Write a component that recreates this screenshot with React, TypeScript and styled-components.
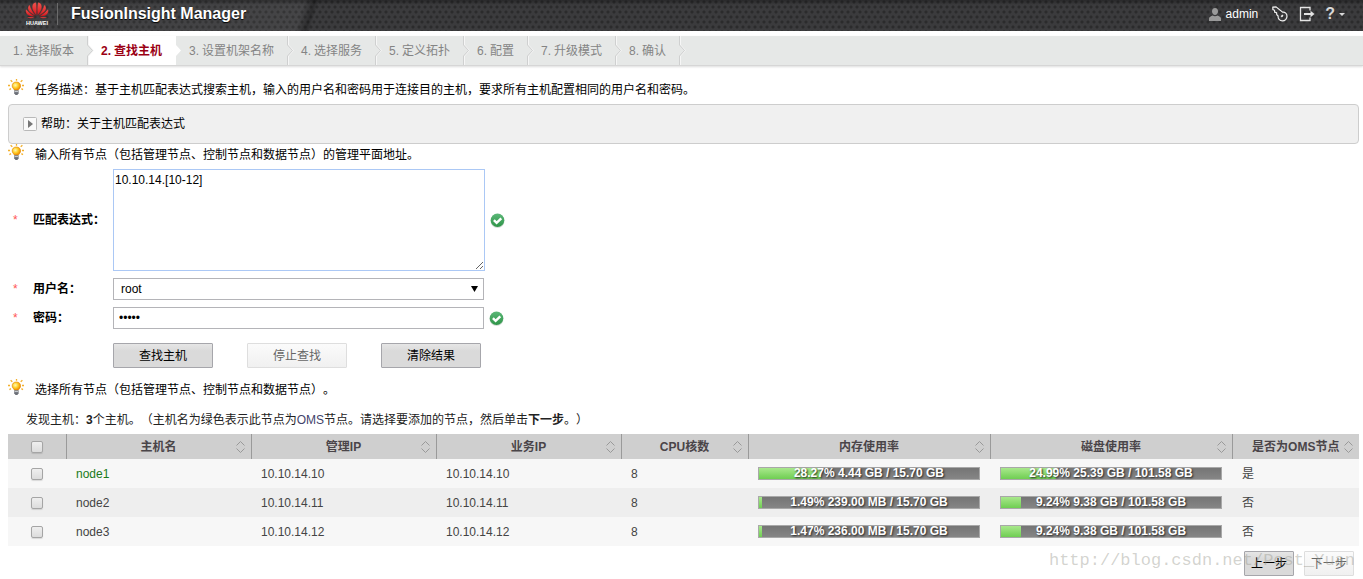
import React, { useState } from "react";
import styled, { createGlobalStyle } from "styled-components";

const GlobalStyle = createGlobalStyle`
  *, *::before, *::after { box-sizing: border-box; }
  body {
    margin: 0;
    background: #fff;
    color: #000;
    font: 12px/20px "Liberation Sans", "Noto Sans CJK SC", sans-serif;
    text-spacing-trim: space-all;
  }
  button, input, select, textarea { font: inherit; color: inherit; margin: 0; }
`;

const Page = styled.div`
  position: relative;
`;

/* ---------- top bar ---------- */

const TopBar = styled.header`
  display: flex;
  align-items: center;
  height: 31px;
  padding: 0 18px 3px 25px;
  color: #fff;
  background:
    linear-gradient(rgba(0, 0, 0, 0.3), rgba(0, 0, 0, 0) 5px),
    linear-gradient(108deg, rgba(255, 255, 255, 0.02) 0, rgba(255, 255, 255, 0.05) 290px, rgba(0, 0, 0, 0.25) 300px, rgba(0, 0, 0, 0) 304px),
    radial-gradient(circle at 2px 2px, #2b2b2c 1px, rgba(43, 43, 44, 0) 2px) 0 0 / 6px 10px,
    radial-gradient(circle at 2px 2px, #2b2b2c 1px, rgba(43, 43, 44, 0) 2px) 3px 5px / 6px 10px,
    #3b3b3d;
`;

const Title = styled.h1`
  flex: 1;
  margin: 0 0 0 8px;
  padding-left: 13px;
  border-left: 1px solid #6b6b6b;
  font-size: 16px;
  line-height: 22px;
  font-weight: bold;
  text-shadow: 0 1px 1px #000;
`;

const UserArea = styled.nav`
  display: flex;
  align-items: center;
`;

const UserLink = styled.a`
  display: flex;
  align-items: center;
  gap: 5px;
  margin-right: 14px;
  color: #fff;
  text-decoration: none;
`;

const IconButton = styled.button<{ $gap?: number }>`
  display: flex;
  align-items: center;
  gap: 4px;
  padding: 0;
  margin-right: ${(p) => p.$gap ?? 0}px;
  border: 0;
  background: none;
  color: #d8d8d8;
  font-size: 16px;
  font-weight: bold;
`;

/* ---------- wizard steps ---------- */

const StepBar = styled.ol`
  display: flex;
  margin: 5px 0 0;
  padding: 0;
  list-style: none;
  background: #e6e8e7;
  border-bottom: 1px solid #d6d6d6;
  box-shadow: 0 1px 2px #ddd;
`;

const StepItem = styled.li<{ $active: boolean }>`
  position: relative;
  display: flex;
  padding: 2px 14px 0 13px;
  line-height: 27px;
  white-space: nowrap;
  color: ${(p) => (p.$active ? "#9b0014" : "#848484")};
  background: ${(p) => (p.$active ? "#fff" : "none")};
  font-weight: ${(p) => (p.$active ? "bold" : "normal")};
`;

const StepNumber = styled.span`
  width: 13px;
`;

const StepEdge = styled.svg`
  position: absolute;
  z-index: 1;
  top: 0;
  left: 100%;
  margin-left: -1px;
`;

/* ---------- content ---------- */

const Main = styled.main`
  padding: 13px 4px 3px 8px;
`;

const HintLine = styled.p`
  display: flex;
  gap: 11px;
  margin: 0;
  padding-bottom: 3px;
  line-height: 22px;
`;

const HelpBox = styled.section`
  display: flex;
  align-items: center;
  height: 40px;
  padding-left: 14px;
  border: 1px solid #cdcdcd;
  border-radius: 4px;
  background: #f0f0f0;
`;

const HelpToggle = styled.button`
  display: flex;
  align-items: center;
  gap: 4px;
  padding: 0;
  border: 0;
  background: none;
`;

const Form = styled.form`
  display: flex;
  flex-direction: column;
  gap: 7px;
  padding: 0 0 11px 5px;
`;

const FieldRow = styled.div`
  display: flex;
  align-items: center;
`;

const Required = styled.span`
  width: 20px;
  color: #f55;
`;

const FieldLabel = styled.label`
  width: 80px;
  font-weight: bold;
`;

const ExpressionBox = styled.textarea`
  display: block;
  width: 372px;
  height: 102px;
  margin-right: 5px;
  padding: 1px;
  border: 1px solid #abc8f5;
  outline: none;
  line-height: 18px;
`;

const SelectFrame = styled.span`
  position: relative;
  display: flex;
  width: 371px;
`;

const UserSelect = styled.select`
  width: 100%;
  height: 22px;
  padding: 0 20px 0 7px;
  border: 1px solid #b4b4b8;
  border-radius: 0;
  background: #fff;
  appearance: none;
`;

const SelectArrow = styled.svg`
  position: absolute;
  top: 8px;
  right: 6px;
  pointer-events: none;
`;

const PasswordBox = styled.input`
  width: 371px;
  height: 22px;
  margin-right: 5px;
  padding: 0 5px;
  border: 1px solid #b4b4b8;
  outline: none;
`;

const ButtonRow = styled.div`
  display: flex;
  gap: 34px;
  padding: 7px 0 0 100px;
`;

const PushButton = styled.button<{ $width: number }>`
  width: ${(p) => p.$width}px;
  height: 25px;
  padding: 0;
  border: 1px solid #a6a6ab;
  border-radius: 1px;
  background: linear-gradient(#e6e6e6, #dadada 30%);
  color: #000;
  &:disabled {
    border-color: #dedede;
    background: linear-gradient(#fbfbfb, #f0f0f0);
    color: #666;
  }
`;

const Summary = styled.p`
  margin: 0;
  padding: 6px 0 4px 18px;
  color: #222;
`;

const OmsWord = styled.span`
  color: #43436b;
`;

/* ---------- host table ---------- */

const HostTable = styled.table`
  width: 100%;
  table-layout: fixed;
  border-collapse: collapse;
  color: #444;
`;

const HeadCell = styled.th`
  height: 25px;
  padding: 0;
  background: #cfcfcf;
  color: #4a4549;
  & + & { border-left: 1px solid #9a9a9a; }
`;

const SortButton = styled.button`
  display: grid;
  grid-template-columns: 1fr auto 1fr;
  align-items: center;
  width: 100%;
  padding: 0 6px 0 6px;
  border: 0;
  background: none;
  font-weight: bold;
  white-space: nowrap;
`;

const SortMark = styled.svg`
  grid-column: 3;
  justify-self: end;
`;

const SortText = styled.span`
  grid-column: 2;
`;

const Row = styled.tr`
  background: #f7f7f7;
  &:nth-child(even) { background: #eee; }
`;

const Cell = styled.td<{ $tone?: string }>`
  height: 29px;
  padding: 0 10px;
  color: ${(p) => p.$tone ?? "#444"};
`;

const CheckCell = styled.td`
  padding: 0;
`;

const Tick = styled.input`
  display: block;
  width: 12px;
  height: 12px;
  margin: 0 auto;
  appearance: none;
  border: 1px solid #a5a5a5;
  border-radius: 2px;
  background: linear-gradient(#efefef, #dcdcdc);
  box-shadow: 0 1px 1px rgba(0, 0, 0, 0.12);
  &:checked { background: #888; }
`;

const Meter = styled.div`
  position: relative;
  height: 13px;
  border: 1px solid #a8a8a8;
  background: linear-gradient(#757575, #858585);
`;

const MeterFill = styled.div`
  height: 100%;
  background: linear-gradient(#a9e88c, #6fce52);
`;

const MeterText = styled.span`
  position: absolute;
  inset: 0;
  color: #fff;
  font-weight: bold;
  line-height: 11px;
  text-align: center;
  white-space: nowrap;
  text-shadow: 1px 1px 2px #222;
`;

const Footer = styled.footer`
  display: flex;
  justify-content: flex-end;
  gap: 10px;
  padding: 5px 5px 0 0;
`;

const Watermark = styled.span`
  position: absolute;
  right: 8px;
  bottom: 8px;
  color: rgba(150, 150, 140, 0.42);
  font-family: "Liberation Mono", monospace;
  font-size: 17px;
  pointer-events: none;
`;

/* ---------- drawings ---------- */

const petals = (
  <>
    <path d="M11.5 13.4C8 9.6 6.3 5.6 7.6 2.7 8.4 1.1 9.9.4 11 .3c1 4 .9 9 .5 13.1Z" />
    <path d="M10.6 13.8C6 11.6 2.9 8.9 2.9 6.2c0-1.6.9-2.8 1.900-3.400C5.500 6.400 8 10.300 10.600 13.800Z" />
    <path d="M10 14.400C6 14.600 2.500 13.700 1.200 11.200.500 9.700.500 8.200 1 7c2.400 3.200 6 5.800 9 7.400Z" />
    <path d="M9.700 15.100C7.400 16.800 4 17 2.200 15Z" />
  </>
);

const Logo = () => (
  <svg width="24" height="24" viewBox="0 0 24 24" role="img" aria-label="HUAWEI">
    <defs>
      <linearGradient id="petal" x1="0" y1="0" x2="0" y2="1">
        <stop offset="0" stopColor="#f2564f" />
        <stop offset="1" stopColor="#d8121b" />
      </linearGradient>
    </defs>
    <g fill="url(#petal)" stroke="#303031" strokeWidth=".3">
      {petals}
      <g transform="translate(24 0) scale(-1 1)">{petals}</g>
    </g>
    <text x="12" y="23" textAnchor="middle" fontSize="5.500" fontWeight="bold" fill="#fff">HUAWEI</text>
  </svg>
);

const PersonIcon = () => (
  <svg width="12" height="13" viewBox="0 0 12 13" fill="#9a9a9a" aria-hidden="true">
    <path d="M6 0c2 0 3 1.300 3 3.300S7.800 7 6 7 3 5.300 3 3.300 4 0 6 0Z" />
    <path d="M0 13v-2.500C0 9 2 8 3.600 7.500c1.400 1 3.400 1 4.800 0C10 8 12 9 12 10.500V13Z" />
  </svg>
);

const KeyIcon = () => (
  <svg width="16" height="16" viewBox="0 0 16 16" fill="none" stroke="#eee" strokeWidth="1.200" aria-hidden="true">
    <path d="M.800 1.200 4 .800l6.600 5.400c2.600-.300 4.400 1.500 4.400 4 0 2.700-2 4.700-4.600 4.700-2.800 0-4.600-2.200-4.300-4.900L4.800 8.700l-.300-2-1.800-.500-.200-1.900L.900 3.500Z" />
    <path d="m9.300 10.800 1.600-1.600" strokeWidth="1.800" />
  </svg>
);

const ExitIcon = () => (
  <svg width="16" height="16" viewBox="0 0 16 16" fill="none" stroke="#e4e4e4" aria-hidden="true">
    <path d="M11 4.500v-3H1.500v13H11v-3" strokeWidth="1.300" />
    <path d="M5 8h8" strokeWidth="2" />
    <path d="M11.500 4.800 15.500 8l-4 3.200Z" fill="#e4e4e4" stroke="none" />
  </svg>
);

const Bulb = () => (
  <svg width="16" height="16" viewBox="0 0 16 16" aria-hidden="true">
    <defs>
      <radialGradient id="glass" cx="0.38" cy="0.4" r="0.62">
        <stop offset="0" stopColor="#fff7b8" />
        <stop offset="0.5" stopColor="#ffd22e" />
        <stop offset="1" stopColor="#ee8a00" />
      </radialGradient>
    </defs>
    <path d="M8.500 0v1.800M2.600 1.200l1.700 1.600M14.400 1.200l-1.700 1.600M0 6.500h2M14 6.500h2M1.400 10.600l1.600-1M15 10.600l-1.600-1" stroke="#f3b02c" strokeWidth="1.300" />
    <path d="M8.300 3c2.600 0 4.300 1.600 4.300 3.900 0 2-1.500 2.700-2.200 4.100H6.400C5.800 9.600 4.200 8.900 4.200 6.900 4.200 4.600 5.700 3 8.300 3Z" fill="url(#glass)" stroke="#e58f0b" strokeWidth=".7" />
    <path d="M6.200 11.200h4.400v3L9.400 16H7.500l-1.300-1.800Z" fill="#6c7078" />
    <path d="M6.600 12.600h3.500" stroke="#cfd3d8" />
  </svg>
);

const ValidMark = () => (
  <svg width="15" height="15" viewBox="0 0 15 15" role="img" aria-label="OK">
    <defs>
      <linearGradient id="ok" x1="0" y1="0" x2="0" y2="1">
        <stop offset="0" stopColor="#5cb878" />
        <stop offset="1" stopColor="#2e9448" />
      </linearGradient>
    </defs>
    <circle cx="7.500" cy="8" r="7" fill="#d5ddd7" />
    <circle cx="7.500" cy="7.200" r="6.800" fill="url(#ok)" />
    <path d="m3.900 7.200 2.700 2.700 4.700-4.600" fill="none" stroke="#fff" strokeWidth="2.400" />
  </svg>
);

const Expander = () => (
  <svg width="14" height="14" viewBox="0 0 14 14" aria-hidden="true">
    <rect x=".5" y=".5" width="13" height="13" rx="1" fill="#fafafa" stroke="#b9b9b9" />
    <path d="M5 3v8l5-4Z" fill="#777" />
  </svg>
);

/* ---------- data ---------- */

const steps = ["选择版本", "查找主机", "设置机架名称", "选择服务", "定义拓扑", "配置", "升级模式", "确认"];

const columns = ["主机名", "管理IP", "业务IP", "CPU核数", "内存使用率", "磁盘使用率", "是否为OMS节点"];
const columnWidths = [58, 185, 185, 185, 127, 242, 242, 127];

interface Host {
  name: string;
  ip: string;
  cores: number;
  mem: number;
  memText: string;
  disk: number;
  diskText: string;
  oms: boolean;
}

const hosts: Host[] = [
  { name: "node1", ip: "10.10.14.10", cores: 8, mem: 28.27, memText: "4.44 GB / 15.70 GB", disk: 24.99, diskText: "25.39 GB / 101.58 GB", oms: true },
  { name: "node2", ip: "10.10.14.11", cores: 8, mem: 1.49, memText: "239.00 MB / 15.70 GB", disk: 9.24, diskText: "9.38 GB / 101.58 GB", oms: false },
  { name: "node3", ip: "10.10.14.12", cores: 8, mem: 1.47, memText: "236.00 MB / 15.70 GB", disk: 9.24, diskText: "9.38 GB / 101.58 GB", oms: false },
];

const Usage = ({ percent, text }: { percent: number; text: string }) => (
  <Meter>
    <MeterFill style={{ width: `${percent}%` }} />
    <MeterText>{percent}% {text}</MeterText>
  </Meter>
);

const Hint = ({ children }: { children: React.ReactNode }) => (
  <HintLine>
    <Bulb />
    <span>{children}</span>
  </HintLine>
);

export default function App() {
  const [expression, setExpression] = useState("10.10.14.[10-12]");
  const [password, setPassword] = useState("admin");
  const activeStep = 1;

  return (
    <Page>
      <GlobalStyle />
      <TopBar>
        <Logo />
        <Title>FusionInsight Manager</Title>
        <UserArea>
          <UserLink href="#user"><PersonIcon />admin</UserLink>
          <IconButton $gap={11} aria-label="修改密码"><KeyIcon /></IconButton>
          <IconButton $gap={10} aria-label="注销"><ExitIcon /></IconButton>
          <IconButton>
            ?
            <svg width="6" height="3" viewBox="0 0 6 3" fill="#d8d8d8" aria-hidden="true"><path d="M0 0h6L3 3Z" /></svg>
          </IconButton>
        </UserArea>
      </TopBar>

      <StepBar>
        {steps.map((step, i) => (
          <StepItem key={step} $active={i === activeStep}>
            <StepNumber>{i + 1}.</StepNumber>
            {step}
            <StepEdge width="8" height="29" viewBox="0 0 8 29" aria-hidden="true">
              <path d="M0 0h1v9l5 5.500-5 5.500v9H0Z" fill={i === activeStep ? "#fff" : "#e6e8e7"} />
              {i !== activeStep && (
                <>
                  <path d="M1.500 0v9l5 5.500-5 5.500v9" fill="none" stroke="#f6f6f6" />
                  <path d="M.5 0v9l5 5.500-5 5.500v9" fill="none" stroke="#cfd0d0" />
                </>
              )}
            </StepEdge>
          </StepItem>
        ))}
      </StepBar>

      <Main>
        <Hint>任务描述：基于主机匹配表达式搜索主机，输入的用户名和密码用于连接目的主机，要求所有主机配置相同的用户名和密码。</Hint>
        <HelpBox>
          <HelpToggle type="button" aria-expanded="false"><Expander />帮助：关于主机匹配表达式</HelpToggle>
        </HelpBox>
        <Hint>输入所有节点（包括管理节点、控制节点和数据节点）的管理平面地址。</Hint>

        <Form onSubmit={(e) => e.preventDefault()}>
          <FieldRow>
            <Required>*</Required>
            <FieldLabel htmlFor="expression">匹配表达式：</FieldLabel>
            <ExpressionBox id="expression" value={expression} onChange={(e) => setExpression(e.target.value)} />
            <ValidMark />
          </FieldRow>
          <FieldRow>
            <Required>*</Required>
            <FieldLabel htmlFor="user">用户名：</FieldLabel>
            <SelectFrame>
              <UserSelect id="user" defaultValue="root">
                <option>root</option>
              </UserSelect>
              <SelectArrow width="7" height="6" viewBox="0 0 7 6" aria-hidden="true"><path d="M0 0h7L3.500 6Z" /></SelectArrow>
            </SelectFrame>
          </FieldRow>
          <FieldRow>
            <Required>*</Required>
            <FieldLabel htmlFor="password">密码：</FieldLabel>
            <PasswordBox id="password" type="password" value={password} onChange={(e) => setPassword(e.target.value)} />
            <ValidMark />
          </FieldRow>
          <ButtonRow>
            <PushButton $width={100}>查找主机</PushButton>
            <PushButton $width={100} disabled>停止查找</PushButton>
            <PushButton $width={100} type="reset">清除结果</PushButton>
          </ButtonRow>
        </Form>

        <Hint>选择所有节点（包括管理节点、控制节点和数据节点）。</Hint>
        <Summary>
          发现主机：<b>3</b>个主机。（主机名为绿色表示此节点为<OmsWord>OMS</OmsWord>节点。请选择要添加的节点，然后单击<b>下一步</b>。）
        </Summary>

        <HostTable>
          <colgroup>
            {columnWidths.map((w, i) => <col key={i} width={w} />)}
          </colgroup>
          <thead>
            <tr>
              <HeadCell><Tick type="checkbox" aria-label="全选" /></HeadCell>
              {columns.map((c) => (
                <HeadCell key={c}>
                  <SortButton type="button">
                    <SortText>{c}</SortText>
                    <SortMark width="9" height="12" viewBox="0 0 9 12" fill="none" stroke="#999" aria-hidden="true">
                      <path d="M.5 4.500 4.500.5l4 4M.5 7.500l4 4 4-4" />
                    </SortMark>
                  </SortButton>
                </HeadCell>
              ))}
            </tr>
          </thead>
          <tbody>
            {hosts.map((h) => (
              <Row key={h.name}>
                <CheckCell><Tick type="checkbox" aria-label={h.name} /></CheckCell>
                <Cell $tone={h.oms ? "#1a7a1a" : undefined}>{h.name}</Cell>
                <Cell>{h.ip}</Cell>
                <Cell>{h.ip}</Cell>
                <Cell>{h.cores}</Cell>
                <Cell><Usage percent={h.mem} text={h.memText} /></Cell>
                <Cell><Usage percent={h.disk} text={h.diskText} /></Cell>
                <Cell>{h.oms ? "是" : "否"}</Cell>
              </Row>
            ))}
          </tbody>
        </HostTable>

        <Footer>
          <PushButton $width={50}>上一步</PushButton>
          <PushButton $width={50} disabled>下一步</PushButton>
        </Footer>
      </Main>
      <Watermark>http://blog.csdn.net/Post_Yuan</Watermark>
    </Page>
  );
}
